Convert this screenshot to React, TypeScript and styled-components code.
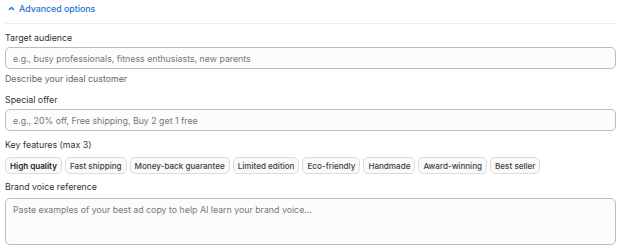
import * as React from 'react';
import styled, { createGlobalStyle } from 'styled-components';

const GlobalStyle = createGlobalStyle`
    body {
        margin: 0;
        background: #ffffff;
        font-family: Inter, "Noto Sans", sans-serif;
        color: #333;
    }
    * { box-sizing: border-box; }
`

const Panel = styled.div`
    width: 620px;
    padding: 0 4px 0 5px;
    display: flex;
    flex-direction: column;
`

const Toggle = styled.button`
    display: flex;
    align-items: center;
    gap: 4px;
    height: 16px;
    padding: 0 0 0 3px;
    border: none;
    background: none;
    color: #1d6fd6;
    font-family: inherit;
    font-size: 8.8px;
    font-weight: 500;
    cursor: pointer;
    align-self: flex-start;
`

const Divider = styled.div`
    height: 1px;
    background: #ececec;
    margin-top: 7px;
`

const Field = styled.div<{ $top: number }>`
    display: flex;
    flex-direction: column;
    margin-top: ${p => p.$top}px;
`

const Label = styled.label`
    font-size: 8.8px;
    line-height: 14px;
    color: #333;
    margin-bottom: 2px;
`

const TextInput = styled.input`
    height: 22px;
    width: 100%;
    border: 1px solid #bcbcbc;
    border-radius: 5px;
    background: #fcfcfc;
    padding: 0 7px;
    font-family: inherit;
    font-size: 8.8px;
    color: #333;
    &::placeholder { color: #787878; }
`

const TextArea = styled.textarea`
    height: 47px;
    width: 100%;
    margin-top: 2px;
    border: 1px solid #bcbcbc;
    border-radius: 5px;
    background: #fcfcfc;
    padding: 5px 7px;
    font-family: inherit;
    font-size: 8.8px;
    line-height: 12px;
    resize: none;
    &::placeholder { color: #787878; }
`

const Hint = styled.span`
    font-size: 8.8px;
    line-height: 14px;
    color: #666;
    margin-top: 3px;
`

const ChipRow = styled.div`
    display: flex;
    flex-wrap: wrap;
    gap: 3px;
    margin-top: 3px;
`

const Chip = styled.button<{ $selected?: boolean }>`
    height: 17px;
    padding: 0 4px;
    border: 1px solid #dcdcdc;
    border-radius: 5px;
    background: #fafafa;
    font-family: inherit;
    font-size: 8.1px;
    font-weight: ${p => p.$selected ? 600 : 500};
    color: ${p => p.$selected ? '#222' : '#404040'};
    cursor: pointer;
`

const features = [
    'High quality',
    'Fast shipping',
    'Money-back guarantee',
    'Limited edition',
    'Eco-friendly',
    'Handmade',
    'Award-winning',
    'Best seller',
];

const ChevronUp = () => (
    <svg width="7" height="7" viewBox="0 0 10 10" fill="none" stroke="currentColor" strokeWidth="1.8" strokeLinecap="round" strokeLinejoin="round">
        <path d="M2 6.5 L5 3.5 L8 6.5" />
    </svg>
);

export default function App() {
    const [selected, setSelected] = React.useState<string[]>(['High quality']);

    const toggle = (f: string) => {
        setSelected(s => s.includes(f) ? s.filter(x => x !== f) : s.length < 3 ? [...s, f] : s);
    };

    return (
        <>
            <GlobalStyle />
            <Panel>
                <Toggle>
                    <ChevronUp />
                    Advanced options
                </Toggle>
                <Divider />
                <Field $top={7}>
                    <Label>Target audience</Label>
                    <TextInput placeholder="e.g., busy professionals, fitness enthusiasts, new parents" />
                    <Hint>Describe your ideal customer</Hint>
                </Field>
                <Field $top={7}>
                    <Label>Special offer</Label>
                    <TextInput placeholder="e.g., 20% off, Free shipping, Buy 2 get 1 free" />
                </Field>
                <Field $top={7}>
                    <Label>Key features (max 3)</Label>
                    <ChipRow>
                        {features.map(f => (
                            <Chip key={f} $selected={selected.includes(f)} onClick={() => toggle(f)}>
                                {f}
                            </Chip>
                        ))}
                    </ChipRow>
                </Field>
                <Field $top={6}>
                    <Label>Brand voice reference</Label>
                    <TextArea placeholder="Paste examples of your best ad copy to help AI learn your brand voice..." />
                </Field>
            </Panel>
        </>
    );
}
